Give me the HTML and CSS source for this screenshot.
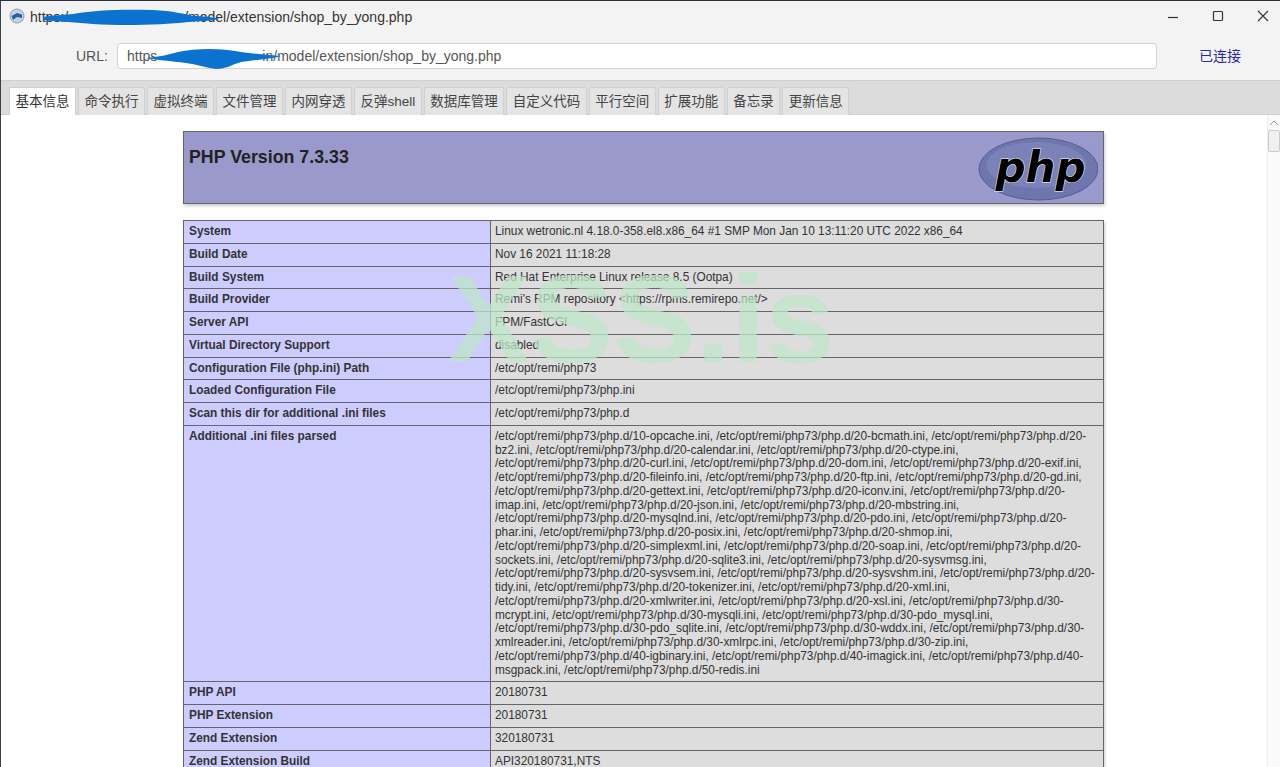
FILE: index.html
```html
<!DOCTYPE html>
<html lang="zh">
<head>
<meta charset="utf-8">
<title>shop_by_yong.php</title>
<link rel="stylesheet" href="styles.css">
</head>
<body>
<div class="window">
  <header class="titlebar">
    <svg class="app-icon" viewBox="0 0 16 16" width="16" height="16"><circle cx="8" cy="8" r="7" fill="#c3d3e6" stroke="#8aa0bd"/><path d="M2.5 8 L8 5 L13 6.5 L13 10 L8 9 L4 12 Z" fill="#2f5f98"/></svg>
    <div class="title-text">https:/<span class="redact redact-title"><svg viewBox="0 0 177 17" width="177" height="17" preserveAspectRatio="none"><path d="M0 8 C12 6 22 6 30 5 C50 1 80 0 110 1 C130 2 142 5 150 7 C160 7 170 8 177 10 C165 12 155 12 145 13 C120 16 80 17 50 15 C35 14 15 12 0 11 Z" fill="#0b73cf"/></svg></span>/model/extension/shop_by_yong.php</div>
    <div class="win-controls">
      <svg viewBox="0 0 12 12" width="12" height="12"><path d="M1 7.5H11" stroke="#333" stroke-width="1.2"/></svg>
      <svg viewBox="0 0 12 12" width="12" height="12"><rect x="1.5" y="1.5" width="9" height="9" rx="1" fill="none" stroke="#333" stroke-width="1.2"/></svg>
      <svg viewBox="0 0 12 12" width="12" height="12"><path d="M1 1L11 11M11 1L1 11" stroke="#333" stroke-width="1.1"/></svg>
    </div>
  </header>
  <div class="urlbar">
    <label class="url-label">URL:</label>
    <div class="url-input">https<span class="redact redact-url"><svg viewBox="0 0 135 21" width="135" height="21" preserveAspectRatio="none"><path d="M0 10 C12 9 22 7 32 4 C50 0 75 0 95 4 C110 6 125 7 135 8 C125 11 108 12 95 14 C85 17 80 21 70 21 C60 20 50 16 40 15 C25 13 10 12 0 10 Z" fill="#0b73cf"/></svg></span>in/model/extension/shop_by_yong.php</div>
    <div class="status">已连接</div>
  </div>
  <nav class="tabs">
    <a class="tab active">基本信息</a>
    <a class="tab">命令执行</a>
    <a class="tab">虚拟终端</a>
    <a class="tab">文件管理</a>
    <a class="tab">内网穿透</a>
    <a class="tab">反弹shell</a>
    <a class="tab">数据库管理</a>
    <a class="tab">自定义代码</a>
    <a class="tab">平行空间</a>
    <a class="tab">扩展功能</a>
    <a class="tab">备忘录</a>
    <a class="tab">更新信息</a>
  </nav>
  <main class="content">
    <div class="page">
      <div class="php-head">
        <h1 class="php-title">PHP Version 7.3.33</h1>
        <svg class="php-logo" viewBox="0 0 122 66" width="122" height="66">
          <ellipse cx="62.5" cy="33" rx="59.5" ry="31" fill="#6f76ad" stroke="#565d96" stroke-width="1"/>
          <ellipse cx="60.5" cy="29" rx="50" ry="23" fill="#7b82b8"/>
          <text class="php-logo-text" x="64.5" y="46">php</text>
        </svg>
      </div>
      <table class="info">
        <tr><td class="e">System</td><td class="v">Linux wetronic.nl 4.18.0-358.el8.x86_64 #1 SMP Mon Jan 10 13:11:20 UTC 2022 x86_64</td></tr>
        <tr><td class="e">Build Date</td><td class="v">Nov 16 2021 11:18:28</td></tr>
        <tr><td class="e">Build System</td><td class="v">Red Hat Enterprise Linux release 8.5 (Ootpa)</td></tr>
        <tr><td class="e">Build Provider</td><td class="v">Remi's RPM repository &lt;https://rpms.remirepo.net/&gt;</td></tr>
        <tr><td class="e">Server API</td><td class="v">FPM/FastCGI</td></tr>
        <tr><td class="e">Virtual Directory Support</td><td class="v">disabled</td></tr>
        <tr><td class="e">Configuration File (php.ini) Path</td><td class="v">/etc/opt/remi/php73</td></tr>
        <tr><td class="e">Loaded Configuration File</td><td class="v">/etc/opt/remi/php73/php.ini</td></tr>
        <tr><td class="e">Scan this dir for additional .ini files</td><td class="v">/etc/opt/remi/php73/php.d</td></tr>
        <tr><td class="e">Additional .ini files parsed</td><td class="v">/etc/opt/remi/php73/php.d/10-opcache.ini, /etc/opt/remi/php73/php.d/20-bcmath.ini, /etc/opt/remi/php73/php.d/20-bz2.ini, /etc/opt/remi/php73/php.d/20-calendar.ini, /etc/opt/remi/php73/php.d/20-ctype.ini, /etc/opt/remi/php73/php.d/20-curl.ini, /etc/opt/remi/php73/php.d/20-dom.ini, /etc/opt/remi/php73/php.d/20-exif.ini, /etc/opt/remi/php73/php.d/20-fileinfo.ini, /etc/opt/remi/php73/php.d/20-ftp.ini, /etc/opt/remi/php73/php.d/20-gd.ini, /etc/opt/remi/php73/php.d/20-gettext.ini, /etc/opt/remi/php73/php.d/20-iconv.ini, /etc/opt/remi/php73/php.d/20-imap.ini, /etc/opt/remi/php73/php.d/20-json.ini, /etc/opt/remi/php73/php.d/20-mbstring.ini, /etc/opt/remi/php73/php.d/20-mysqlnd.ini, /etc/opt/remi/php73/php.d/20-pdo.ini, /etc/opt/remi/php73/php.d/20-phar.ini, /etc/opt/remi/php73/php.d/20-posix.ini, /etc/opt/remi/php73/php.d/20-shmop.ini, /etc/opt/remi/php73/php.d/20-simplexml.ini, /etc/opt/remi/php73/php.d/20-soap.ini, /etc/opt/remi/php73/php.d/20-sockets.ini, /etc/opt/remi/php73/php.d/20-sqlite3.ini, /etc/opt/remi/php73/php.d/20-sysvmsg.ini, /etc/opt/remi/php73/php.d/20-sysvsem.ini, /etc/opt/remi/php73/php.d/20-sysvshm.ini, /etc/opt/remi/php73/php.d/20-tidy.ini, /etc/opt/remi/php73/php.d/20-tokenizer.ini, /etc/opt/remi/php73/php.d/20-xml.ini, /etc/opt/remi/php73/php.d/20-xmlwriter.ini, /etc/opt/remi/php73/php.d/20-xsl.ini, /etc/opt/remi/php73/php.d/30-mcrypt.ini, /etc/opt/remi/php73/php.d/30-mysqli.ini, /etc/opt/remi/php73/php.d/30-pdo_mysql.ini, /etc/opt/remi/php73/php.d/30-pdo_sqlite.ini, /etc/opt/remi/php73/php.d/30-wddx.ini, /etc/opt/remi/php73/php.d/30-xmlreader.ini, /etc/opt/remi/php73/php.d/30-xmlrpc.ini, /etc/opt/remi/php73/php.d/30-zip.ini, /etc/opt/remi/php73/php.d/40-igbinary.ini, /etc/opt/remi/php73/php.d/40-imagick.ini, /etc/opt/remi/php73/php.d/40-msgpack.ini, /etc/opt/remi/php73/php.d/50-redis.ini</td></tr>
        <tr><td class="e">PHP API</td><td class="v">20180731</td></tr>
        <tr><td class="e">PHP Extension</td><td class="v">20180731</td></tr>
        <tr><td class="e">Zend Extension</td><td class="v">320180731</td></tr>
        <tr><td class="e">Zend Extension Build</td><td class="v">API320180731,NTS</td></tr>
      </table>
    </div>
    <div class="scrollbar">
      <svg class="scroll-up" viewBox="0 0 10 6" width="10" height="6"><path d="M1 5L5 1L9 5" fill="none" stroke="#999" stroke-width="1"/></svg>
      <div class="scroll-thumb"></div>
    </div>
    <div class="watermark">XSS.is</div>
  </main>
</div>
</body>
</html>
```
FILE: styles.css
```css
* { box-sizing: border-box; }
html, body { margin: 0; padding: 0; height: 767px; overflow: hidden; }
body { font-family: "Liberation Sans", Arial, "Noto Sans CJK SC", sans-serif; background: #f3f3f3; color: #222; }
.window { height: 767px; display: flex; flex-direction: column; border-top: 1px solid #2b2f38; border-left: 1px solid #3a3f48; }
.titlebar { height: 40px; flex: none; display: flex; align-items: center; padding: 0 11px 10px 8px; background: #f3f3f3; font-size: 14px; }
.app-icon { flex: none; margin-right: 5px; }
.title-text { color: #333; white-space: nowrap; flex: 1; padding-top: 1px; }
.redact { display: inline-block; position: relative; vertical-align: baseline; height: 1px; }
.redact svg { position: absolute; }
.redact-title { width: 116px; }
.redact-title svg { top: -12px; left: -25px; }
.redact-url { width: 105px; }
.redact-url svg { top: -12px; left: -11px; }
.win-controls { display: flex; gap: 33px; }
.win-controls svg { display: block; }
.urlbar { height: 39px; flex: none; display: flex; align-items: flex-start; padding-top: 2px; background: #f3f3f3; }
.url-label { width: 116px; flex: none; padding: 3px 0 0 75px; font-size: 14px; line-height: 20px; color: #555; }
.url-input { width: 1040px; height: 26px; flex: none; padding-left: 9px; background: #fff; border: 1px solid #d2d2d2; border-radius: 3px; font-size: 14px; line-height: 24px; color: #555; white-space: nowrap; }
.status { margin: 2px 0 0 42px; font-size: 14px; line-height: 20px; color: #2a2aa8; font-family: "Noto Sans CJK SC", sans-serif; }
.tabs { height: 35px; flex: none; display: flex; align-items: flex-end; gap: 2px; padding-left: 8px; background: #dcdcdc; border-bottom: 1px solid #cfcfcf; border-top: 1px solid #d0d0d0; }
.tab { height: 28px; padding: 0 5.5px 4px; display: flex; align-items: center; margin-bottom: -1px; background: #e4e4e4; border: 1px solid #d0d0d0; border-bottom: 0; border-radius: 2px 2px 0 0; font-size: 13.5px; color: #444; white-space: nowrap; }
.tab.active { background: #fff; color: #333; }
.content { flex: 1; min-height: 0; position: relative; display: flex; background: #fff; overflow: hidden; }
.page { flex: 1; min-width: 0; padding: 16px 0 0 182px; }
.php-head { width: 921px; height: 73px; display: flex; justify-content: space-between; padding: 0 5px; background: #9999cc; border: 1px solid #666; box-shadow: 1px 2px 3px #ccc; }
.php-title { margin: 0; padding-top: 15px; font-size: 17.8px; line-height: 21px; font-weight: 700; color: #222; }
.php-logo { margin-top: 4px; }
.php-logo-text { font-family: "DejaVu Sans", sans-serif; font-size: 42px; font-weight: 700; font-style: italic; text-anchor: middle; fill: #000; stroke: #fff; stroke-width: 1; paint-order: stroke; }
.info { width: 921px; margin-top: 16px; table-layout: fixed; border-collapse: collapse; font-size: 11.85px; line-height: 13.75px; box-shadow: 1px 2px 3px #ccc; }
.info td { border: 1px solid #666; padding: 4px 5px; vertical-align: baseline; }
.info td.v { padding-left: 4px; padding-right: 3px; }
.e { width: 307px; background: #ccccff; font-weight: 700; color: #333; }
.v { background: #dddddd; color: #333; overflow-wrap: break-word; }
.scrollbar { width: 13px; flex: none; position: relative; background: #fafafa; border-left: 1px solid #eee; display: flex; flex-direction: column; align-items: center; }
.scroll-up { margin-top: 5px; }
.scroll-thumb { width: 12px; height: 22px; margin-top: 4px; background: #f0f0f0; border: 1px solid #ccc; border-radius: 2px; }
.watermark { position: absolute; left: 446px; top: 134px; font-size: 124.5px; line-height: 140px; font-weight: 700; color: rgba(190, 230, 200, .75); pointer-events: none; white-space: nowrap; }
```
